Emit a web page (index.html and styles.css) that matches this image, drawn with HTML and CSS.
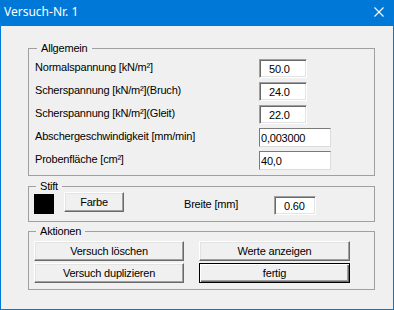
FILE: index.html
```html
<!DOCTYPE html>
<html lang="de">

<head>
    <meta charset="UTF-8">
    <title>Versuch-Nr. 1</title>
    <link rel="stylesheet" href="styles.css">
</head>

<body>
    <div class="window">
        <div class="titlebar">
            <span class="title">Versuch-Nr. 1</span>
            <svg class="close" width="10" height="10" viewBox="0 0 10 10">
                <path d="M0.5 0.5 L9.5 9.5 M9.5 0.5 L0.5 9.5" stroke="#fff" stroke-width="1.1" fill="none" />
            </svg>
        </div>

        <div class="client">
            <fieldset class="group group-general">
                <legend>Allgemein</legend>
                <div class="row">
                    <label for="normal">Normalspannung [kN/m²]</label>
                    <input id="normal" class="field sunken short" value="50.0">
                </div>
                <div class="row">
                    <label for="bruch">Scherspannung [kN/m²](Bruch)</label>
                    <input id="bruch" class="field sunken short" value="24.0">
                </div>
                <div class="row">
                    <label for="gleit">Scherspannung [kN/m²](Gleit)</label>
                    <input id="gleit" class="field sunken short" value="22.0">
                </div>
                <div class="row">
                    <label for="speed">Abschergeschwindigkeit [mm/min]</label>
                    <input id="speed" class="field flat long" value="0,003000">
                </div>
                <div class="row">
                    <label for="area">Probenfläche [cm²]</label>
                    <input id="area" class="field flat long" value="40,0">
                </div>
            </fieldset>

            <fieldset class="group group-pen">
                <legend>Stift</legend>
                <div class="pen-row">
                    <span class="swatch"></span>
                    <button class="btn btn-color">Farbe</button>
                    <label class="pen-label" for="width">Breite [mm]</label>
                    <input id="width" class="field sunken pen-width" value="0.60">
                </div>
            </fieldset>

            <fieldset class="group group-actions">
                <legend>Aktionen</legend>
                <div class="actions">
                    <button class="btn">Versuch löschen</button>
                    <button class="btn">Werte anzeigen</button>
                    <button class="btn">Versuch duplizieren</button>
                    <button class="btn btn-default">fertig</button>
                </div>
            </fieldset>
        </div>
    </div>
</body>

</html>
```

FILE: styles.css
```css
body {
    margin: 0;
    padding: 0;
    background: #f0f0f0;
    font-family: "Liberation Sans", Arial, sans-serif;
    font-size: 11px;
    letter-spacing: -0.2px;
    color: #000;
}

.window {
    width: 394px;
    height: 310px;
    display: flex;
    flex-direction: column;
}

.titlebar {
    height: 26px;
    background: #0078d7;
    color: #fff;
    display: flex;
    align-items: center;
    justify-content: space-between;
    padding: 0 10px 0 4px;
    flex-shrink: 0;
}

.title {
    font-family: "Noto Sans", "Open Sans", sans-serif;
    font-size: 12px;
    letter-spacing: 0;
    line-height: 16px;
    margin-top: -2px;
}

.close {
    display: block;
    margin-top: -3px;
}

.client {
    flex: 1;
    border: 1px solid #0078d7;
    border-top: none;
    padding: 16px 18px 0 27px;
}

.group {
    margin: 0;
    border: 1px solid #a0a0a0;
    min-inline-size: 0;
}

.group legend {
    padding: 0 4px;
    margin-left: 2px;
    line-height: 13px;
}

.group-general {
    padding: 4px 6px 5px 6px;
}

.group-pen {
    margin-top: 4px;
    padding: 0 5px 6px 5px;
}

.group-actions {
    margin-top: 3px;
    padding: 3px 5px 6px 5px;
}

.row {
    display: grid;
    grid-template-columns: 224px auto;
    align-items: center;
    height: 19px;
    margin-bottom: 4px;
}

.row:last-child {
    margin-bottom: 0;
}

.row label {
    line-height: 13px;
    margin-top: -2px;
}

.field {
    box-sizing: border-box;
    height: 19px;
    background: #fff;
    font-family: inherit;
    font-size: 11px;
    letter-spacing: inherit;
    color: #000;
    margin: 0;
    outline: none;
}

.sunken {
    border: 1px solid;
    border-color: #a0a0a0 #fff #fff #a0a0a0;
    box-shadow: inset 1px 1px 0 #696969, inset -1px -1px 0 #e3e3e3;
    padding: 0 0 0 9px;
}

.flat {
    border: 1px solid;
    border-color: #7a7a7a #dcdcdc #dcdcdc #7a7a7a;
    padding: 0 0 0 1px;
}

.short {
    width: 48px;
}

.long {
    width: 72px;
}

.pen-row {
    display: flex;
    align-items: flex-start;
    margin-top: -1px;
    height: 23px;
}

.swatch {
    width: 20px;
    height: 20px;
    margin-top: 2px;
    background: #000;
}

.btn {
    box-sizing: border-box;
    height: 20px;
    background: #f0f0f0;
    border: 1px solid;
    border-color: #fff #696969 #696969 #fff;
    box-shadow: inset -1px -1px 0 #a0a0a0, inset 1px 1px 0 #e3e3e3;
    font-family: inherit;
    font-size: 11px;
    letter-spacing: inherit;
    color: #000;
    padding: 0;
    margin: 0;
}

.btn-color {
    width: 60px;
    margin-left: 10px;
}

.btn-default {
    border-color: #000;
    box-shadow: inset 1px 1px 0 #fff, inset -1px -1px 0 #696969, inset -2px -2px 0 #a0a0a0;
}

.pen-label {
    width: 90px;
    margin-left: 60px;
    line-height: 13px;
    margin-top: 6px;
}

.pen-width {
    width: 42px;
    margin-top: 4px;
}

.actions {
    display: grid;
    grid-template-columns: 150px 151px;
    column-gap: 15px;
    row-gap: 2px;
}
```
